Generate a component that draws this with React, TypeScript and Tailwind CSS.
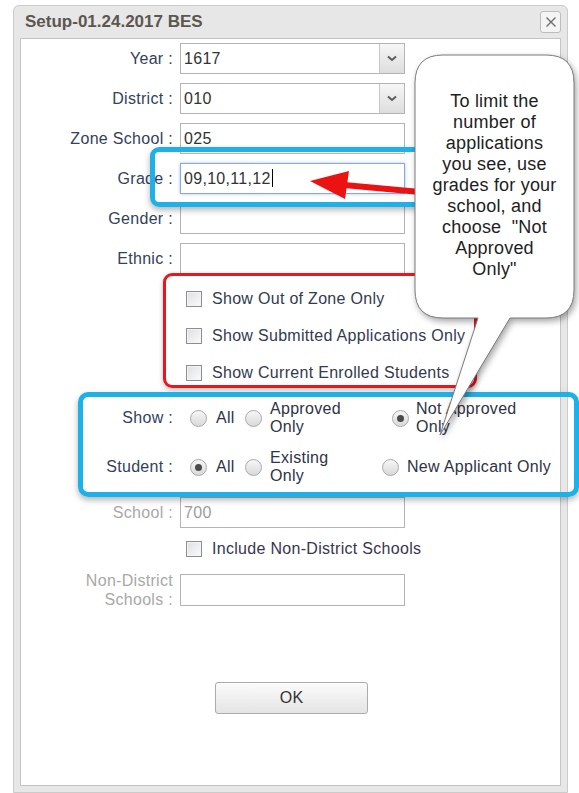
import type { ReactNode } from 'react'

const label = 'text-[#34415a]'

function Field({
  name,
  value,
  select,
  focused,
  muted,
}: {
  name: string
  value?: string
  select?: boolean
  focused?: boolean
  muted?: boolean
}) {
  return (
    <div className="flex h-[31px] items-center gap-[7px]">
      <span className={`w-[152px] text-right ${muted ? 'text-[#a8a8a8]' : label}`}>{name} :</span>
      <div
        className={`flex h-full w-[225px] items-center border bg-white ${
          focused
            ? 'border-[#86a9e4] shadow-[0_0_3px_rgba(90,140,220,0.5)]'
            : 'border-[#b4b4b4]'
        }`}
      >
        <span className={`flex-1 pl-[3px] ${muted ? 'text-[#9c9c9c]' : 'text-[#333]'}`}>
          {value}
          {focused && <span className="ml-px inline-block h-[18px] w-px translate-y-[3px] bg-black" />}
        </span>
        {select && (
          <span className="flex h-full w-[25px] items-center justify-center border-l border-[#c8c8c8] bg-gradient-to-b from-[#f6f6f6] to-[#dedede]">
            <svg width="10" height="7" viewBox="0 0 10 7">
              <path d="M1 1.5 L5 5 L9 1.5" fill="none" stroke="#5a5a5a" strokeWidth="2" />
            </svg>
          </span>
        )}
      </div>
    </div>
  )
}

function Checkbox() {
  return (
    <span className="inline-block h-[16px] w-[16px] shrink-0 border border-[#8e8e8e] bg-gradient-to-br from-[#dcdfe4] to-[#fbfbfb] shadow-[inset_0_0_0_1px_#f4f4f4]" />
  )
}

function Radio({ on }: { on?: boolean }) {
  return (
    <span className="flex h-[17px] w-[17px] shrink-0 items-center justify-center rounded-full border border-[#a9a9a9] bg-gradient-to-b from-[#f7f7f7] to-[#d9d9d9]">
      {on && <span className="h-[7px] w-[7px] rounded-full bg-[#4a4a4a]" />}
    </span>
  )
}

function Option({ on, gap, width, children }: { on?: boolean; gap: string; width?: string; children: ReactNode }) {
  return (
    <div className={`flex items-center ${gap} ${width ?? ''}`}>
      <Radio on={on} />
      <span className="leading-[18px] text-[#2e3346]">{children}</span>
    </div>
  )
}

function CheckRow({ children }: { children: ReactNode }) {
  return (
    <div className="flex h-[37px] items-center gap-[10px] pl-[165px]">
      <Checkbox />
      <span className="text-[#343a50]">{children}</span>
    </div>
  )
}

export default function App() {
  return (
    <div className="relative h-[793px] w-[579px] overflow-hidden bg-white pt-[5px] font-['Liberation_Sans',Arial,sans-serif] text-[16px] tracking-[0.3px]">
      <div className="ml-[13px] w-[555px] rounded-t-[6px] border border-[#cbcbcb] bg-[#e7e7e7] px-[6px] pb-[6px]">
        <div className="flex h-[32px] items-center justify-between">
          <span className="pl-[5px] text-[17px] font-bold tracking-normal text-[#5c5650]">Setup-01.24.2017 BES</span>
          <button className="flex h-[22px] w-[21px] items-center justify-center rounded-[3px] border border-[#bcbcbc] bg-[#f4f4f4]">
            <svg width="12" height="12" viewBox="0 0 12 12">
              <path d="M1.5 1.5 L10.5 10.5 M10.5 1.5 L1.5 10.5" stroke="#6e6e6e" strokeWidth="1.4" />
            </svg>
          </button>
        </div>

        <div className="flex h-[748px] flex-col border border-[#c4c4c4] bg-white pt-[4px]">
          <div className="flex flex-col gap-[9px]">
            <Field name="Year" value="1617" select />
            <Field name="District" value="010" select />
            <Field name="Zone School" value="025" />
            <Field name="Grade" value="09,10,11,12" focused />
            <Field name="Gender" />
            <Field name="Ethnic" />
          </div>

          <div className="mt-[6px]">
            <CheckRow>Show Out of Zone Only</CheckRow>
            <CheckRow>Show Submitted Applications Only</CheckRow>
            <CheckRow>Show Current Enrolled Students</CheckRow>
          </div>

          <div className="mt-[7px] flex h-[40px] items-center">
            <span className={`w-[152px] text-right ${label}`}>Show :</span>
            <div className="ml-[17px] flex items-center">
              <Option gap="gap-[9px]" width="w-[55px]">All</Option>
              <Option gap="gap-[8px]" width="w-[147px]">
                Approved
                <br />
                Only
              </Option>
              <Option on gap="gap-[7px]">
                Not Approved
                <br />
                Only
              </Option>
            </div>
          </div>
          <div className="mt-[9px] flex h-[40px] items-center">
            <span className={`w-[152px] text-right ${label}`}>Student :</span>
            <div className="ml-[17px] flex items-center">
              <Option on gap="gap-[9px]" width="w-[55px]">All</Option>
              <Option gap="gap-[8px]" width="w-[137px]">
                Existing
                <br />
                Only
              </Option>
              <Option gap="gap-[8px]">New Applicant Only</Option>
            </div>
          </div>

          <div className="mt-[10px]">
            <Field name="School" value="700" muted />
          </div>

          <div className="mt-[10px] flex h-[22px] items-center gap-[10px] pl-[165px]">
            <Checkbox />
            <span className="text-[#3a3452]">Include Non-District Schools</span>
          </div>

          <div className="mt-[14px] flex h-[32px] items-center gap-[7px]">
            <span className="w-[152px] text-right leading-[19px] text-[#a8a8a8]">
              Non-District
              <br />
              Schools :
            </span>
            <div className="h-full w-[225px] border border-[#b4b4b4]" />
          </div>

          <button className="mt-[76px] ml-[194px] h-[32px] w-[153px] rounded-[3px] border border-[#acacac] bg-gradient-to-b from-[#fbfbfb] to-[#e4e4e4] text-[#333]">
            OK
          </button>
        </div>
      </div>

      {/* annotation: red outline around the checkbox group */}
      <div className="absolute top-[273px] left-[163px] h-[115px] w-[314px] rounded-[9px] border-[3px] border-[#e8161d] shadow-[0_2px_5px_rgba(0,0,0,0.25)]" />

      {/* annotation: blue outlines */}
      <div className="absolute top-[147px] left-[150px] h-[60px] w-[280px] rounded-[9px] border-[5px] border-[#1db1e8] shadow-[0_3px_6px_rgba(0,0,0,0.3)]" />
      <div className="absolute top-[392px] left-[78px] h-[105px] w-[501px] rounded-[10px] border-[5px] border-[#1db1e8] shadow-[0_3px_6px_rgba(0,0,0,0.3)]" />

      {/* annotation: red arrow pointing at the grade field */}
      <svg className="absolute inset-0 pointer-events-none" width="579" height="793">
        <line x1="344" y1="185" x2="420" y2="192" stroke="#ec1212" strokeWidth="6" />
        <polygon points="310,181 349,171 345,199" fill="#ec1212" />
      </svg>

      {/* callout bubble */}
      <svg
        className="absolute inset-0 pointer-events-none drop-shadow-[2px_3px_3px_rgba(0,0,0,0.35)]"
        width="579"
        height="793"
      >
        <path
          d="M443 55 H546 Q574 55 574 83 V290 Q574 318 546 318 H510 L440 435 L478 318 H443 Q415 318 415 290 V83 Q415 55 443 55 Z"
          fill="#fff"
          stroke="#7a7a7a"
          strokeWidth="1"
        />
      </svg>
      <div className="absolute top-[91px] left-[415px] w-[159px] text-center text-[18px] leading-[21px] tracking-[0.2px] text-[#1e1e1e]">
        To limit the
        <br />
        number of
        <br />
        applications
        <br />
        you see, use
        <br />
        grades for your
        <br />
        school, and
        <br />
        choose &nbsp;"Not
        <br />
        Approved
        <br />
        Only"
      </div>
    </div>
  )
}
